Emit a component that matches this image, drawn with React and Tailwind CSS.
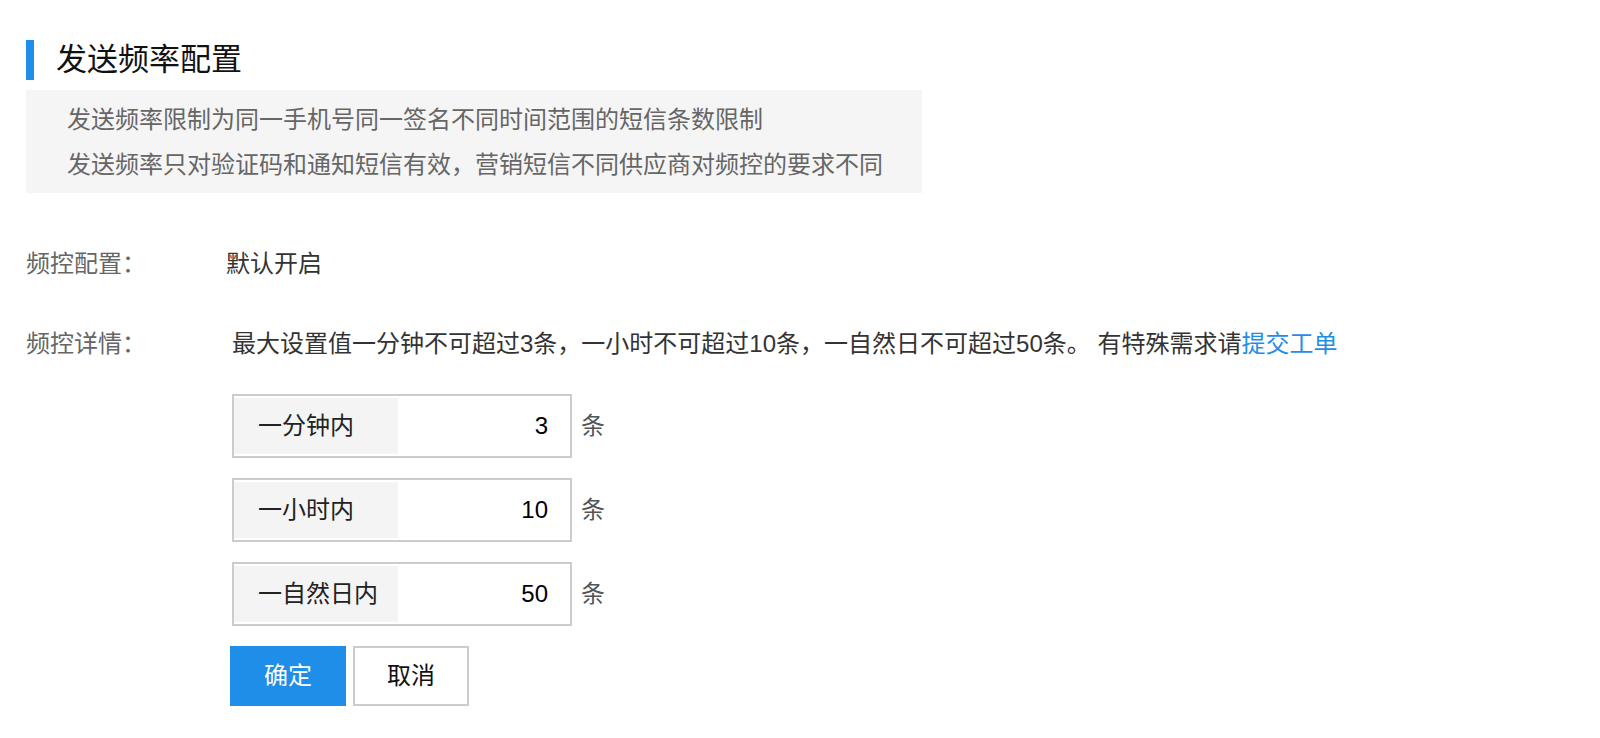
import { useState } from "react";

const font = { fontFamily: '"Liberation Sans", "Noto Sans CJK SC", sans-serif' };

function LimitRow({ label, value }) {
  return (
    <div className="flex items-center">
      <div className="flex w-[340px] h-[64px] border-2 border-[#cccccc] py-[2px] bg-white">
        <div className="w-[164px] bg-[#f4f4f4] pl-[24px] flex items-center text-[24px] text-[#222]">
          {label}
        </div>
        <div className="flex-1 flex items-center justify-end pr-[22px] text-[24px] text-black">
          {value}
        </div>
      </div>
      <span className="ml-[9px] text-[24px] text-[#555]">条</span>
    </div>
  );
}

export default function App() {
  const [limits] = useState([
    { label: "一分钟内", value: 3 },
    { label: "一小时内", value: 10 },
    { label: "一自然日内", value: 50 },
  ]);

  return (
    <div className="min-h-[738px] bg-white pl-[26px] pt-[40px]" style={font}>
      <div className="flex items-center h-[40px]">
        <div className="w-[8px] h-[40px] bg-[#1e8ee8]" />
        <h2 className="ml-[22px] text-[31px] leading-[40px] text-[#111]">发送频率配置</h2>
      </div>

      <div className="mt-[10px] w-[896px] h-[103px] bg-[#f5f5f5] pl-[41px] pt-[7px] text-[24px] leading-[45px] text-[#666]">
        <p>发送频率限制为同一手机号同一签名不同时间范围的短信条数限制</p>
        <p>发送频率只对验证码和通知短信有效，营销短信不同供应商对频控的要求不同</p>
      </div>

      <div className="mt-[51px] flex text-[24px] leading-[40px]">
        <div className="w-[200px] text-[#666]">频控配置：</div>
        <div className="text-[#333]">默认开启</div>
      </div>

      <div className="mt-[40px] flex text-[24px] leading-[40px]">
        <div className="w-[206px] text-[#666]">频控详情：</div>
        <div className="text-[#333]">
          最大设置值一分钟不可超过3条，一小时不可超过10条，一自然日不可超过50条。 有特殊需求请
          <a className="text-[#1e8ee8] cursor-pointer">提交工单</a>
        </div>
      </div>

      <div className="mt-[30px] ml-[206px] flex flex-col gap-[20px]">
        {limits.map((l) => (
          <LimitRow key={l.label} label={l.label} value={l.value} />
        ))}
      </div>

      <div className="mt-[20px] ml-[204px] flex gap-[7px]">
        <button className="w-[116px] h-[60px] bg-[#1e8ee8] text-white text-[24px]">确定</button>
        <button className="w-[116px] h-[60px] border-2 border-[#cccccc] bg-white text-[#111] text-[24px]">
          取消
        </button>
      </div>
    </div>
  );
}
